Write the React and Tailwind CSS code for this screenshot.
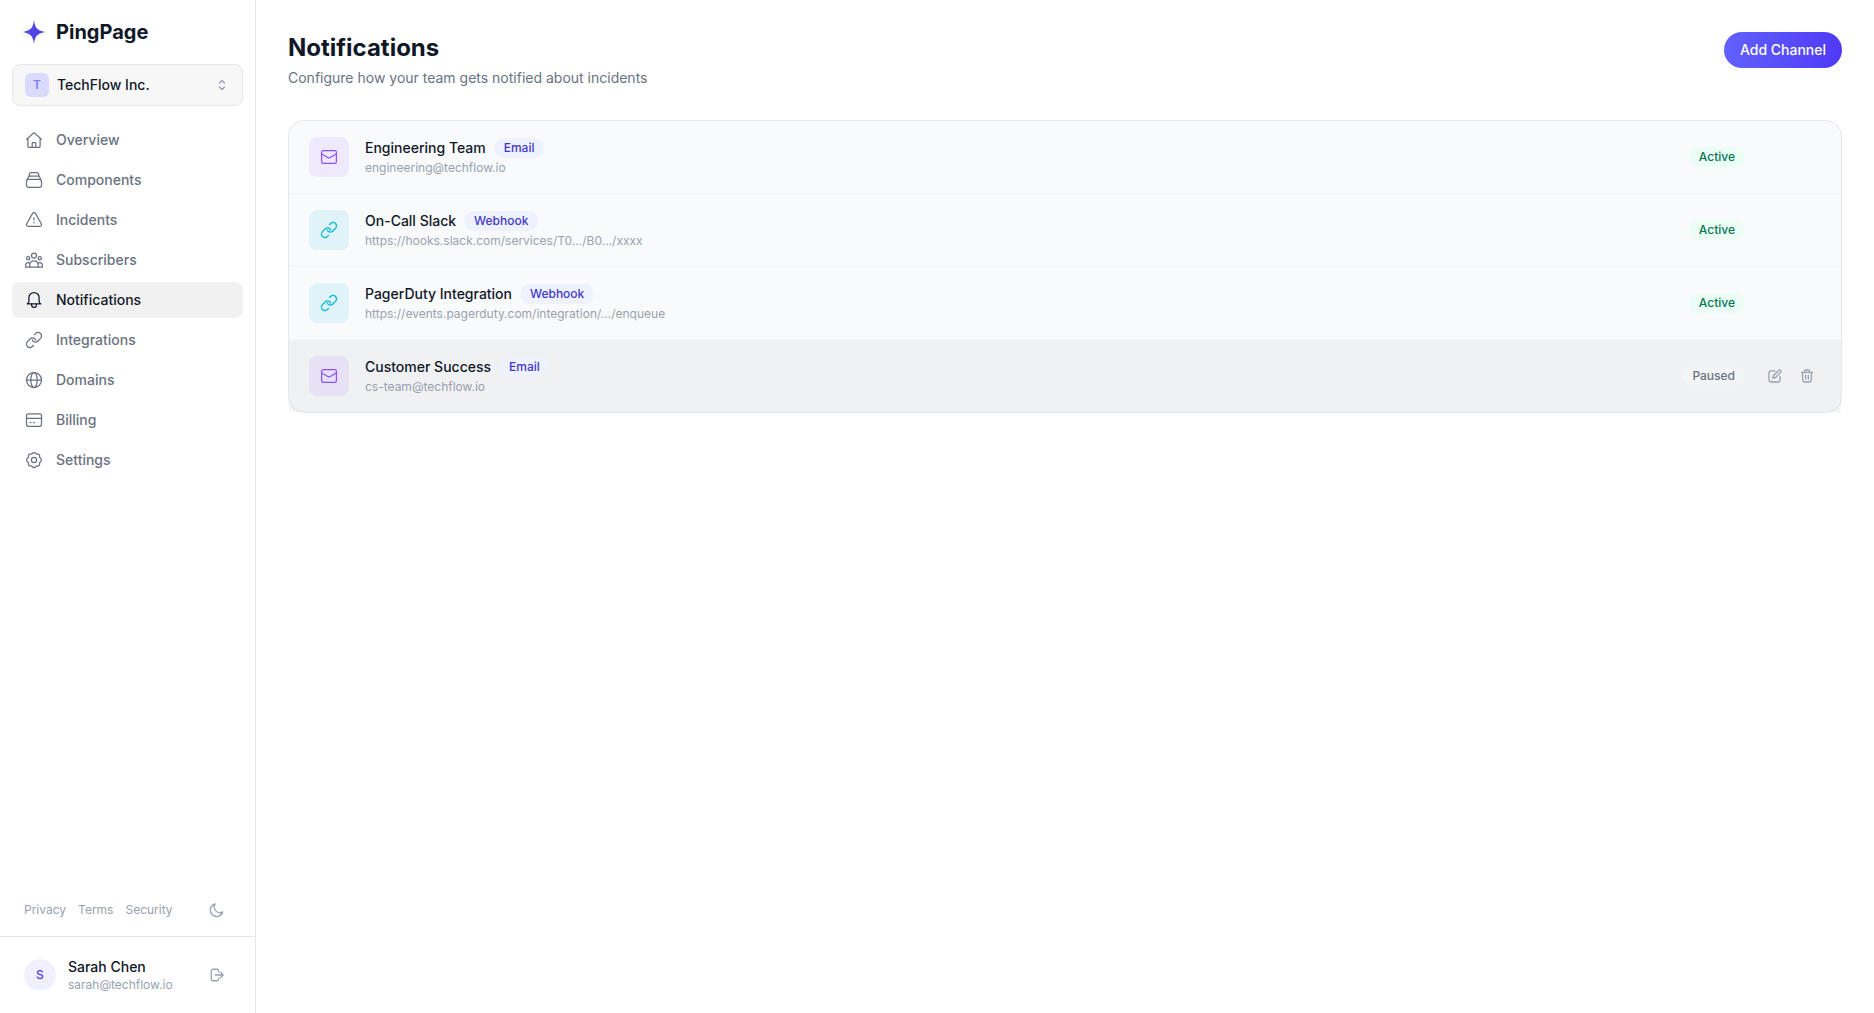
import React, { useState } from 'react';
import { HiOutlineChevronUpDown } from 'react-icons/hi2';

const Icon = ({ children, className = 'size-5', strokeWidth = 1.25 }) => (
  <svg
    viewBox="0 0 20 20"
    fill="none"
    stroke="currentColor"
    strokeWidth={strokeWidth}
    strokeLinecap="round"
    strokeLinejoin="round"
    aria-hidden="true"
    className={`${className} shrink-0`}
  >
    {children}
  </svg>
);

const HomeIcon = () => (
  <Icon>
    <path d="M2.6 9.2 10 2.6l7.4 6.6M3.9 8.2v8.1c0 .6.5 1.1 1.1 1.1h10c.6 0 1.1-.5 1.1-1.1V8.2" />
    <path d="M8.2 17.4v-3.9c0-.5.4-.8.8-.8h2c.4 0 .8.3.8.8v3.9" />
  </Icon>
);

const StackIcon = () => (
  <Icon>
    <rect x="2.5" y="9.3" width="15" height="8.1" rx="2.1" />
    <path d="M3.2 9.8 4.4 7c.3-.6.8-1 1.5-1h8.2c.7 0 1.2.4 1.500 1l1.200 2.800" />
    <path d="m5 6 .6-2.300c.2-.7.7-1.100 1.400-1.100h6c.7 0 1.200.4 1.400 1.100L15 6" />
  </Icon>
);

const WarningIcon = () => (
  <Icon>
    <path d="M8.6 3.4 2.7 13.7c-.7 1.2.2 2.6 1.5 2.6h11.6c1.3 0 2.2-1.4 1.500-2.600L11.400 3.400c-.6-1.100-2.200-1.100-2.800 0Z" />
    <path d="M10 7.8v2.200" />
    <path d="M10 12.700h.01" strokeWidth="1.600" />
  </Icon>
);

const UsersIcon = () => (
  <Icon>
    <circle cx="10" cy="5.600" r="2.500" />
    <circle cx="4.200" cy="8.200" r="1.600" />
    <circle cx="15.800" cy="8.200" r="1.600" />
    <path d="M5.800 17v-2a4.200 4.200 0 0 1 8.400 0v2Z" />
    <path d="M5.800 17H1.600v-1.800a2.600 2.600 0 0 1 4.200-2M14.200 17h4.200v-1.800a2.600 2.600 0 0 0-4.200-2" />
  </Icon>
);

const BellIcon = () => (
  <Icon>
    <path d="M3.200 13.800c1-.3 1.700-1.200 1.700-2.600V7.600a5.100 5.100 0 0 1 10.200 0v3.600c0 1.400.7 2.300 1.700 2.600Z" />
    <path d="M7.600 14v1a2.400 2.400 0 0 0 4.800 0v-1" />
  </Icon>
);

const LinkIcon = () => (
  <Icon>
    <path d="m10.600 4.500 1-1a3.450 3.450 0 0 1 4.900 4.900l-2.600 2.600a3.450 3.450 0 0 1-4.900 0 3.400 3.400 0 0 1-.7-1" />
    <path d="m9.400 15.500-1 1a3.450 3.450 0 0 1-4.900-4.900l2.600-2.600a3.450 3.450 0 0 1 4.900 0 3.400 3.400 0 0 1 .7 1" />
  </Icon>
);

const GlobeIcon = () => (
  <Icon>
    <circle cx="10" cy="10" r="7.500" />
    <ellipse cx="10" cy="10" rx="3.200" ry="7.500" />
    <path d="M2.500 10h15" />
  </Icon>
);

const CardIcon = () => (
  <Icon>
    <rect x="2.500" y="3.800" width="15" height="12.500" rx="2" />
    <path d="M2.500 8.300h15M5.900 12.500h1M9.500 12.500h1" />
  </Icon>
);

const GearIcon = () => (
  <Icon>
    <circle cx="10" cy="10" r="2.600" />
    <path d="M8.300 3.400c.7-1.200 2.700-1.200 3.400 0 .3.500.9.800 1.500.6 1.400-.4 2.700 1 2.400 2.400-.2.600.1 1.200.6 1.500 1.500.7 1.500 3.500 0 4.200-.5.300-.8.900-.6 1.500.3 1.400-1 2.800-2.400 2.400-.6-.2-1.200.1-1.500.6-.7 1.200-2.700 1.200-3.400 0-.3-.5-.9-.8-1.500-.6-1.400.4-2.700-1-2.400-2.400.2-.6-.1-1.200-.6-1.500-1.500-.7-1.500-3.500 0-4.200.5-.3.800-.9.6-1.500-.3-1.400 1-2.800 2.400-2.400.6.200 1.200-.1 1.500-.6Z" />
  </Icon>
);

const MailIcon = () => (
  <Icon>
    <rect x="2.600" y="3.700" width="14.800" height="12.600" rx="1.600" />
    <path d="m2.800 7 6.400 3.700c.5.300 1.100.3 1.600 0L17.200 7" />
  </Icon>
);

const MoonIcon = () => (
  <Icon className="size-4" strokeWidth={1.6}>
    <path d="M7.600 2.400A8 8 0 1 0 17.300 12.400 7.200 7.200 0 0 1 7.600 2.400Z" />
  </Icon>
);

const LogoutIcon = () => (
  <Icon className="size-4" strokeWidth={1.6}>
    <path d="M12 6.200V5a2.200 2.200 0 0 0-2.200-2.200H5A2.200 2.200 0 0 0 2.800 5v10c0 1.200 1 2.200 2.200 2.200h4.800c1.200 0 2.200-1 2.200-2.200v-1.200" />
    <path d="M7.800 10h10M14.400 6.600l3.400 3.400-3.400 3.400" />
  </Icon>
);

const EditIcon = () => (
  <Icon className="size-4" strokeWidth={1.6}>
    <path d="M10 3.700H4.700a2.200 2.200 0 0 0-2.200 2.200v9.400c0 1.200 1 2.200 2.200 2.200h9.400c1.200 0 2.200-1 2.200-2.200V10.500" />
    <path d="M7.300 12.700s2.600-.2 3.600-1.200l6.200-6.200a1.700 1.700 0 0 0-2.400-2.400L8.500 9.100c-1 1-1.200 3.600-1.200 3.600Z" />
  </Icon>
);

const TrashIcon = () => (
  <Icon className="size-4" strokeWidth={1.6}>
    <path d="M3.200 5.400h13.600M7 5.200V3.900c0-.8.6-1.400 1.400-1.400h3.200c.8 0 1.400.6 1.400 1.400v1.300" />
    <path d="m15.700 5.600-.4 9.800c-.1 1.200-1 2.100-2.200 2.100H6.900c-1.200 0-2.100-.9-2.200-2.100l-.4-9.800M8.300 9v4.800M11.700 9v4.800" />
  </Icon>
);

const navItems = [
  { name: 'Overview', icon: HomeIcon },
  { name: 'Components', icon: StackIcon },
  { name: 'Incidents', icon: WarningIcon },
  { name: 'Subscribers', icon: UsersIcon },
  { name: 'Notifications', icon: BellIcon },
  { name: 'Integrations', icon: LinkIcon },
  { name: 'Domains', icon: GlobeIcon },
  { name: 'Billing', icon: CardIcon },
  { name: 'Settings', icon: GearIcon },
];

const channels = [
  { id: 1, name: 'Engineering Team', type: 'Email', target: 'engineering@techflow.io', active: true },
  { id: 2, name: 'On-Call Slack', type: 'Webhook', target: 'https://hooks.slack.com/services/T0.../B0.../xxxx', active: true },
  { id: 3, name: 'PagerDuty Integration', type: 'Webhook', target: 'https://events.pagerduty.com/integration/.../enqueue', active: true },
  { id: 4, name: 'Customer Success', type: 'Email', target: 'cs-team@techflow.io', active: false },
];

const Sidebar = ({ current }) => (
  <aside className="w-64 shrink-0 flex flex-col border-r border-gray-200">
    <div className="h-16 px-6 flex items-center gap-3">
      <svg viewBox="0 0 20 24" className="w-5 h-6 shrink-0 overflow-visible" aria-hidden="true">
        <path
          d="M10 0c.9 7.500 3 10.400 11 12-8 1.600-10.100 4.500-11 12-.9-7.500-3-10.400-11-12C7 10.400 9.100 7.500 10 0Z"
          fill="#4f46e5"
        />
      </svg>
      <span className="text-xl font-bold text-gray-900">PingPage</span>
    </div>

    {/* Workspace switcher */}
    <div className="px-3">
      <button className="w-full flex items-center px-3 py-2 rounded-lg border border-gray-200 bg-[#f7f7f7] text-left">
        <span className="size-6 rounded-md bg-[#dadafc] text-[#7c7ff5] text-xs font-semibold flex items-center justify-center">
          T
        </span>
        <span className="ml-2 flex-1 text-sm font-medium text-gray-900">TechFlow Inc.</span>
        <HiOutlineChevronUpDown className="size-4 text-gray-400" strokeWidth={2} />
      </button>
    </div>

    <nav className="flex-1 px-3 py-4 space-y-1">
      {navItems.map(({ name, icon: NavIcon }) => (
        <a
          key={name}
          href="#"
          className={`flex items-center gap-3 px-3 py-2 rounded-lg text-sm font-medium ${
            name === current ? 'bg-[#f1f1f1] text-gray-900' : 'text-gray-500'
          }`}
        >
          <NavIcon />
          {name}
        </a>
      ))}
    </nav>

    {/* Legal links and theme toggle */}
    <div className="px-6 pb-3 flex items-center justify-between">
      <div className="flex gap-3 text-xs text-gray-400">
        <a href="#">Privacy</a>
        <a href="#">Terms</a>
        <a href="#">Security</a>
      </div>
      <button aria-label="Toggle theme" className="p-1.5 text-gray-400">
        <MoonIcon />
      </button>
    </div>

    {/* User */}
    <div className="px-6 py-5 flex items-center gap-3 border-t border-gray-200">
      <div className="size-8 rounded-full bg-[#f1f0fe] text-indigo-600 text-xs font-medium flex items-center justify-center">
        S
      </div>
      <div className="flex-1 min-w-0">
        <p className="text-sm font-medium text-gray-900">Sarah Chen</p>
        <p className="text-xs text-gray-400">sarah@techflow.io</p>
      </div>
      <button aria-label="Sign out" className="p-1.5 text-gray-400">
        <LogoutIcon />
      </button>
    </div>
  </aside>
);

const ChannelRow = ({ channel, selected, onSelect }) => (
  <li
    onMouseEnter={onSelect}
    className={`flex items-center gap-4 px-5 py-4 border-b border-gray-100 last:border-b-0 ${
      selected ? 'bg-black/[0.035]' : ''
    }`}
  >
    <div
      className={`size-10 rounded-lg flex items-center justify-center ${
        channel.type === 'Email' ? 'bg-violet-500/10 text-violet-500' : 'bg-cyan-500/10 text-cyan-500'
      }`}
    >
      {channel.type === 'Email' ? <MailIcon /> : <LinkIcon />}
    </div>
    <div className="flex-1 min-w-0">
      <div className="flex items-center gap-2">
        <p className="text-sm font-medium text-gray-900">{channel.name}</p>
        <span className="px-2.5 py-0.5 rounded-full bg-indigo-50 text-[#4338ca] text-xs font-medium">
          {channel.type}
        </span>
      </div>
      <p className="mt-0.5 text-xs text-gray-400 truncate">{channel.target}</p>
    </div>
    <span
      className={`px-2.5 py-0.5 rounded-full text-xs font-medium ${
        channel.active ? 'bg-emerald-50 text-[#047857]' : 'bg-gray-100 text-gray-500'
      }`}
    >
      {channel.active ? 'Active' : 'Paused'}
    </span>
    <div className={`flex gap-1 text-gray-400 ${selected ? '' : 'invisible'}`}>
      <button aria-label={`Edit ${channel.name}`} className="p-1.5">
        <EditIcon />
      </button>
      <button aria-label={`Delete ${channel.name}`} className="p-1.5">
        <TrashIcon />
      </button>
    </div>
  </li>
);

const App = () => {
  const [selectedId, setSelectedId] = useState(4);

  return (
    <div className="min-h-screen flex bg-white font-['Inter',sans-serif]">
      <Sidebar current="Notifications" />

      <main className="flex-1 min-w-0 p-8">
        {/* Header */}
        <div className="flex items-start justify-between mb-8">
          <div>
            <h1 className="text-2xl font-bold text-gray-900">Notifications</h1>
            <p className="mt-1 text-sm text-gray-500">Configure how your team gets notified about incidents</p>
          </div>
          <button className="px-4 py-2 rounded-full bg-linear-to-r from-[#6260ff] to-[#4f39f6] text-sm font-medium text-white">
            Add Channel
          </button>
        </div>

        {/* Channels */}
        <ul className="rounded-2xl border border-gray-200 bg-[#f9fafc]">
          {channels.map((channel) => (
            <ChannelRow
              key={channel.id}
              channel={channel}
              selected={channel.id === selectedId}
              onSelect={() => setSelectedId(channel.id)}
            />
          ))}
        </ul>
      </main>
    </div>
  );
};

export default App;
